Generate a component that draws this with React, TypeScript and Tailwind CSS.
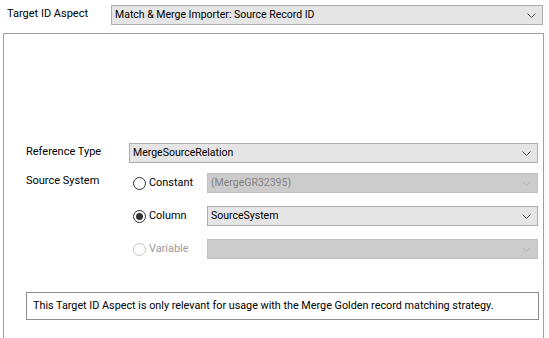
import React from "react";

function Chevron({ disabled }: { disabled?: boolean }) {
  return (
    <svg width="9" height="5" viewBox="0 0 9 5" className="shrink-0">
      <polyline
        points="0.5,0.5 4.5,4.5 8.5,0.5"
        fill="none"
        stroke={disabled ? "#b4b4b4" : "#505050"}
        strokeWidth="1"
      />
    </svg>
  );
}

function Select({
  value,
  disabled,
  className,
}: {
  value: string;
  disabled?: boolean;
  className?: string;
}) {
  return (
    <div
      className={
        "flex h-[20px] items-center justify-between border pl-[3px] pr-[6px] " +
        (disabled
          ? "border-[#bfbfbf] bg-[#cccccc] text-[#838383] "
          : "border-[#adadad] bg-[#e5e5e5] text-black ") +
        (className ?? "")
      }
    >
      <span className="leading-none">{value}</span>
      <Chevron disabled={disabled} />
    </div>
  );
}

function Radio({ checked, disabled }: { checked?: boolean; disabled?: boolean }) {
  return (
    <div
      className={
        "flex h-[13px] w-[13px] shrink-0 items-center justify-center rounded-full border bg-white " +
        (disabled ? "border-[#c4c4c4]" : "border-[#333333]")
      }
    >
      {checked && <div className="h-[7px] w-[7px] rounded-full bg-[#333333]" />}
    </div>
  );
}

function RadioRow({
  label,
  checked,
  disabled,
  value,
  selDisabled,
}: {
  label: string;
  checked?: boolean;
  disabled?: boolean;
  value: string;
  selDisabled?: boolean;
}) {
  return (
    <div className="flex items-center">
      <div className="flex w-[78px] items-center gap-[3px] pl-[4px]">
        <Radio checked={checked} disabled={disabled} />
        <span className={"text-[10.9px] " + (disabled ? "text-[#9a9a9a]" : "text-black")}>{label}</span>
      </div>
      <Select value={value} disabled={selDisabled} className="flex-1" />
    </div>
  );
}

export default function App() {
  return (
    <div
      className="h-[338px] w-[549px] overflow-hidden bg-white text-[10.5px] leading-[16px] text-black"
      style={{ fontFamily: 'Roboto, "Noto Sans", sans-serif' }}
    >
      <div className="flex items-center pt-[5px]">
        <div className="w-[111px] pl-[7px] pb-[3px] text-[11px]">Target ID Aspect</div>
        <Select value="Match & Merge Importer: Source Record ID" className="w-[432px]" />
      </div>
      <div className="ml-[3px] mt-[8px] h-[320px] w-[541px] border-x border-t border-[#a0a0a0] pl-[22px] pr-[5px] pt-[109px]">
        <div className="flex items-center">
          <div className="w-[103px] pb-[2px] text-[11px]">Reference Type</div>
          <Select value="MergeSourceRelation" className="flex-1" />
        </div>
        <div className="mt-[10px] flex">
          <div className="w-[103px] pt-[0px] text-[11px]">Source System</div>
          <div className="flex flex-1 flex-col gap-[13px]">
            <RadioRow label="Constant" value="(MergeGR32395)" selDisabled />
            <RadioRow label="Column" checked value="SourceSystem" />
            <RadioRow label="Variable" disabled value="" selDisabled />
          </div>
        </div>
        <div className="mt-[33px] mr-[-1px] flex h-[28px] items-center border border-[#8c8c8c] pl-[6px] text-[10.8px]">
          This Target ID Aspect is only relevant for usage with the Merge Golden record matching strategy.
        </div>
      </div>
    </div>
  );
}
